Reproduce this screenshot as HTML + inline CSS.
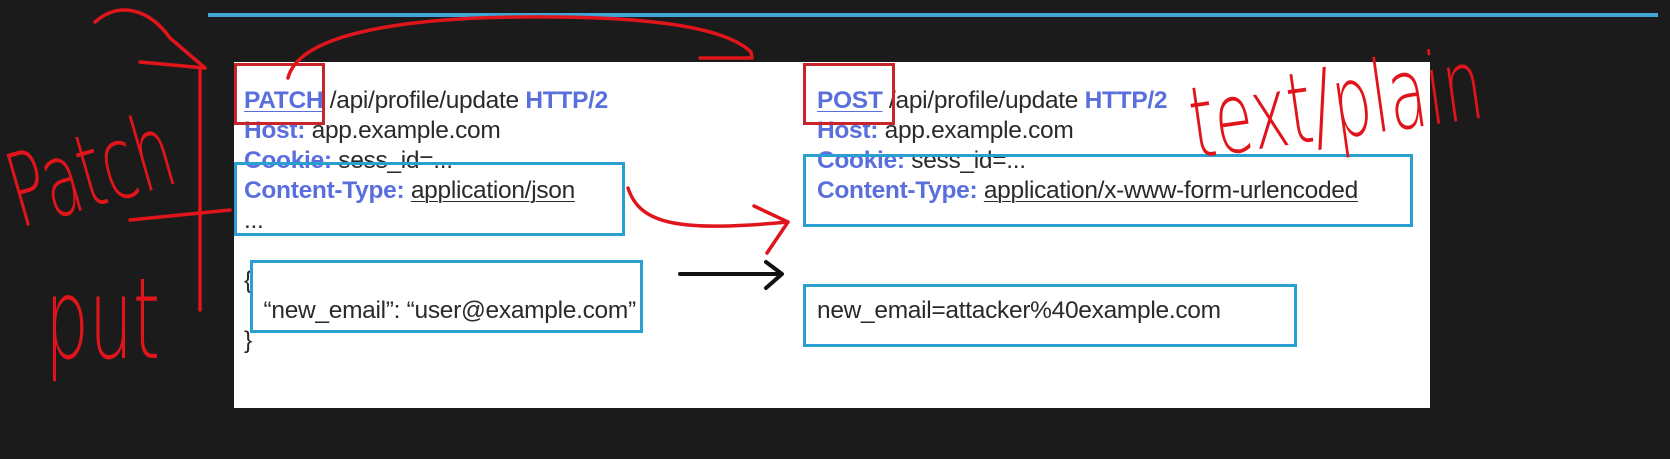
<!DOCTYPE html>
<html><head><meta charset="utf-8"><style>
html,body{margin:0;padding:0}
body{width:1670px;height:459px;overflow:hidden;background:#1b1b1b;position:relative;font-family:"Liberation Sans",sans-serif}
.panel{position:absolute;left:234px;top:62px;width:1196px;height:346px;background:#fff}
.t{position:absolute;font-size:24.5px;color:#2a2a2a;white-space:nowrap;line-height:30px;letter-spacing:-0.3px}
.b{color:#5a6fdc;font-weight:bold}
.u{text-decoration:underline;text-decoration-thickness:1px;text-underline-offset:3px}
.box{position:absolute;border:3px solid #2a9fd0;box-sizing:border-box}
.rbox{position:absolute;border:3px solid #c8242b;box-sizing:border-box}
svg{position:absolute;left:0;top:0}
</style></head><body>
<div style="position:absolute;left:208px;top:13px;width:1450px;height:4px;background:#3fa6d6"></div>
<div class="panel"></div>
<div class="t" style="left:244px;top:86px"><span class="b u">PATCH</span> /api/profile/update <span class="b">HTTP/2</span><br><span class="b">Host:</span> app.example.com<br><span class="b">Cookie:</span> sess_id=...<br><span class="b">Content-Type:</span> <span class="u">application/json</span><br>...</div>
<div class="t" style="left:244px;top:266px">{<br>&nbsp;&nbsp;&nbsp;“new_email”: “user@example.com”<br>}</div>
<div class="t" style="left:817px;top:86px"><span class="b u">POST</span> /api/profile/update <span class="b">HTTP/2</span><br><span class="b">Host:</span> app.example.com<br><span class="b">Cookie:</span> sess_id=...<br><span class="b">Content-Type:</span> <span class="u">application/x-www-form-urlencoded</span></div>
<div class="t" style="left:817px;top:296px">new_email=attacker%40example.com</div>
<div class="box" style="left:234px;top:162px;width:391px;height:74px"></div>
<div class="box" style="left:250px;top:260px;width:393px;height:73px"></div>
<div class="box" style="left:803px;top:154px;width:610px;height:73px"></div>
<div class="box" style="left:803px;top:284px;width:494px;height:63px"></div>
<div class="rbox" style="left:234px;top:63px;width:91px;height:62px"></div>
<div class="rbox" style="left:803px;top:63px;width:92px;height:62px"></div>
<svg width="1670" height="459" viewBox="0 0 1670 459" fill="none" stroke-linecap="round" stroke-linejoin="round">
<path d="M680 274 L780 274 M766 262 L782 274 L766 288" stroke="#111" stroke-width="4"/>
<g stroke="#e0151b" stroke-width="3.5">
<path d="M288 78 C300 30 420 18 520 17 C620 16 720 22 751 52 L752 58 M700 58 L752 58"/>
<path d="M628 188 C640 225 680 232 788 222 M754 206 L788 222 L767 253"/>
<path d="M95 22 C120 0 150 10 170 38 L205 68 M140 62 L205 68"/>
<path d="M200 70 L200 310"/>
<path d="M130 220 L230 210"/>
</g>
<g fill="#e0151b" font-family="DejaVu Sans, sans-serif" font-weight="200">
<text x="0" y="0" font-size="64" transform="translate(20 228) rotate(-16) scale(0.95 1.6)">Patch</text>
<text x="0" y="0" font-size="66" transform="translate(45 358) scale(1.05 1.7)">put</text>
<text x="0" y="0" font-size="62" transform="translate(1195 158) rotate(-8) scale(1.0 1.6)">text/plain</text>
</g>
</svg>
</body></html>
